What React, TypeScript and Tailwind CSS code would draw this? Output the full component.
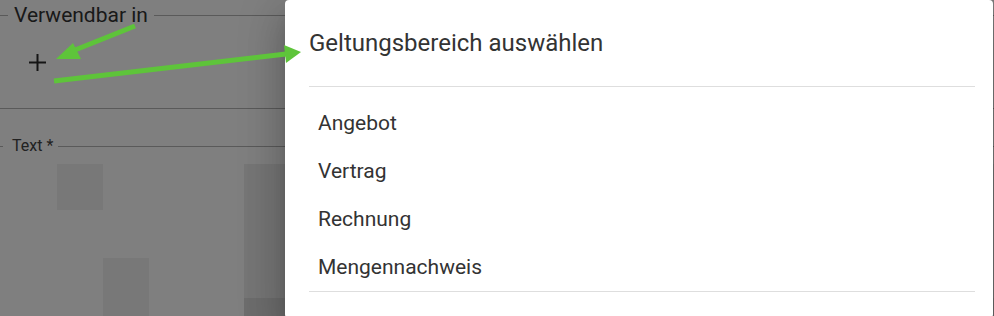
import React from "react";

const items = ["Angebot", "Vertrag", "Rechnung", "Mengennachweis"];

export default function App() {
  return (
    <div
      className="relative w-[994px] h-[316px] overflow-hidden bg-white"
      style={{ fontFamily: "Roboto, 'Liberation Sans', sans-serif" }}
    >
      {/* underlying page */}
      <div className="flex flex-col text-[#333]">
        <div className="flex items-center h-[30px]">
          <div className="w-[8px] h-px bg-[#b4b4b4]" />
          <span className="px-[6px] text-[21px] leading-none">Verwendbar in</span>
          <div className="flex-1 h-px bg-[#b4b4b4]" />
        </div>
        <div className="h-[78px] pl-[29px] pt-[24px]">
          <svg width="17" height="17" viewBox="0 0 17 17" className="block">
            <path d="M8.5 0v17M0 8.5h17" stroke="#2a2a2a" strokeWidth="2" />
          </svg>
        </div>
        <div className="h-px bg-[#b4b4b4]" />
        <div className="flex items-center h-[36px] mt-[19px]">
          <div className="w-[3px] h-px bg-[#b4b4b4]" />
          <span className="pl-[9px] pr-[5px] text-[16px] leading-none text-[#444]">Text *</span>
          <div className="flex-1 h-px bg-[#b4b4b4]" />
        </div>
        <div className="grid grid-cols-[46px_46px_46px_46px_46px_3px_1fr] grid-rows-[46px_48px_40px_20px] ml-[11px]">
          <div />
          <div className="bg-[#f0f0f0]" />
          <div />
          <div />
          <div />
          <div />
          <div className="row-span-4 bg-[#ececec] flex flex-col">
            <div className="flex-1" />
            <div className="h-[20px] bg-[#dadada]" />
          </div>
          <div /><div /><div /><div /><div /><div />
          <div />
          <div />
          <div className="row-span-2 bg-[#f0f0f0]" />
          <div /><div /><div />
        </div>
      </div>

      {/* overlay */}
      <div className="absolute inset-0 bg-black/50" />

      {/* dialog */}
      <div className="absolute left-[285px] top-0 w-[708px] h-[318px] bg-white rounded-[4px] shadow-[0_11px_15px_-7px_rgba(0,0,0,0.2),0_24px_38px_3px_rgba(0,0,0,0.14),0_9px_46px_8px_rgba(0,0,0,0.12)] flex flex-col pl-[24px] pr-[18px]">
        <div className="h-[86px] flex items-center text-[24px] text-[#333] leading-none">
          Geltungsbereich auswählen
        </div>
        <div className="h-px bg-[#dedede]" />
        <div className="flex flex-col pt-[12px]">
          {items.map((t) => (
            <div key={t} className="h-[48px] flex items-center pl-[9px] text-[21px] text-[#333] leading-none">
              {t}
            </div>
          ))}
        </div>
        <div className="h-px bg-[#dedede]" />
      </div>

      {/* annotation arrows */}
      <svg className="absolute inset-0 pointer-events-none" width="994" height="316" viewBox="0 0 994 316">
        <g fill="#5ec43a" stroke="#5ec43a">
          <line x1="135" y1="26" x2="70" y2="52" strokeWidth="5" />
          <polygon points="56,59 73,43 81,59" stroke="none" />
          <line x1="54" y1="81" x2="286" y2="54" strokeWidth="5" />
          <polygon points="301,52 284,45 286,63" stroke="none" />
        </g>
      </svg>
    </div>
  );
}
